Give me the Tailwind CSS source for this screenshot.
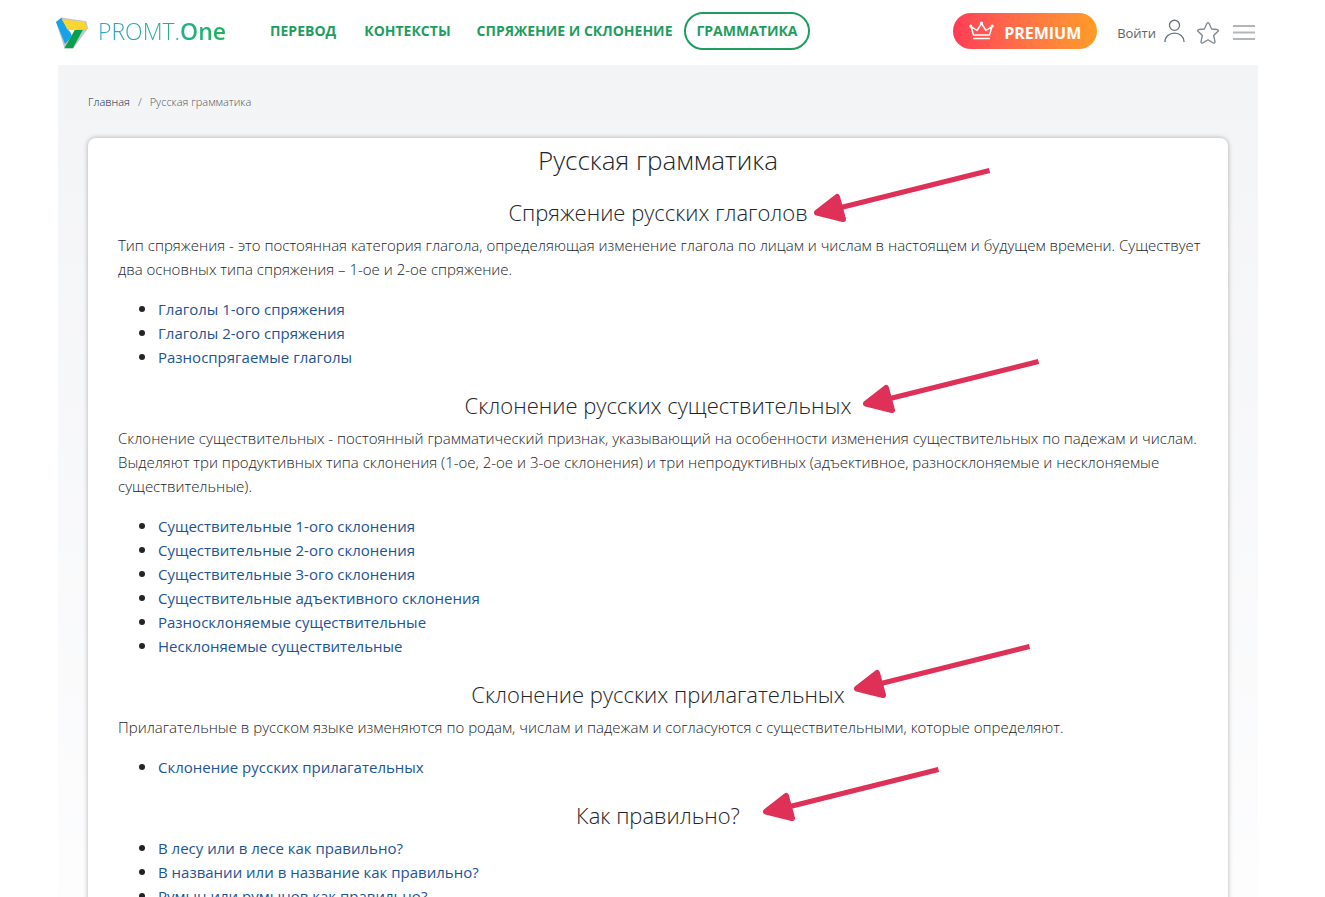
<!DOCTYPE html>
<html lang="ru">
<head>
<meta charset="utf-8">
<meta name="viewport" content="width=device-width, initial-scale=1">
<title>Русская грамматика</title>
<script src="https://cdn.jsdelivr.net/npm/@tailwindcss/browser@4"></script>
</head>
<body class="h-screen overflow-hidden bg-white pr-[9px] font-['Open_Sans','Noto_Sans',sans-serif] text-[15px] leading-6 text-[#212529]">
<svg class="hidden" aria-hidden="true">
  <symbol id="arrow" viewBox="0 0 180 60">
    <path d="M28 41.500 176.500 4.500" stroke="#df3057" stroke-width="5" fill="none"/>
    <path d="M4 46.500 24 31 30 53Z" fill="#df3057" stroke="#df3057" stroke-width="6" stroke-linejoin="round"/>
  </symbol>
</svg>
<div class="mx-auto max-w-[1200px]">
  <header class="flex h-[65px] items-center pb-1">
    <a href="#" class="-ml-0.5 flex items-center gap-2.5">
      <svg class="mt-1 h-8 w-8" viewBox="18 48 99 96" aria-hidden="true">
        <path d="M35 48 112 60 117 82 72 143 44 143 18 62Z" fill="#c4c6c8"/>
        <path d="M35 49 18 62 46 130 62 112 69 96 58 90 52 84Z" fill="#16a2e6"/>
        <path d="M36 54 105 61 115 84 54 84Z" fill="#fdd52f"/>
        <path d="M58 86H80L68 105Z" fill="#fff"/>
        <path d="M76 87H101L70 143H44Z" fill="#08a04c"/>
      </svg>
      <span class="bg-linear-to-r from-[#35a3c9] to-[#21b35c] bg-clip-text text-[23px] leading-8 font-light text-transparent">PROMT.<b class="font-semibold">One</b></span>
    </a>
    <nav class="ml-[30px] flex items-center text-sm leading-5 font-bold whitespace-nowrap text-[#1f9d60]">
      <a href="#" class="px-3.5">ПЕРЕВОД</a>
      <a href="#" class="pr-3 pl-3.5">КОНТЕКСТЫ</a>
      <a href="#" class="pr-3 pl-3.5">СПРЯЖЕНИЕ И СКЛОНЕНИЕ</a>
      <a href="#" class="rounded-full border-2 border-[#1f9d60] px-2.5 py-[7px]">ГРАММАТИКА</a>
    </nav>
    <div class="ml-auto flex items-center pr-[3px]">
      <a href="#" class="flex h-9 w-36 items-center gap-2.5 rounded-full bg-linear-to-r from-[#ff3a55] to-[#ff9c24] pl-4 text-base leading-5 font-bold text-white">
        <svg class="h-5 w-[25px]" viewBox="0 0 25 20" fill="none" stroke="#fff" stroke-width="1.500" stroke-linejoin="round" aria-hidden="true">
          <path d="M4.500 14 2 5.500 8 9.500 12.500 2.500 17 9.500 23 5.500 20.500 14ZM4 17.500H21"/>
          <g fill="#fff" stroke="none"><circle cx="1.800" cy="5" r="1.600"/><circle cx="12.500" cy="2" r="1.600"/><circle cx="23.200" cy="5" r="1.600"/></g>
        </svg>
        <span class="pt-1">PREMIUM</span>
      </a>
      <div class="flex items-center pt-1 pl-5">
        <a href="#" class="flex items-center gap-2 text-[13px] text-[#5b6470]">Войти
          <svg class="-mt-1 h-6 w-[21px]" viewBox="0 0 22 24" fill="none" stroke="#6b7580" stroke-width="1.400" aria-hidden="true"><circle cx="11" cy="6" r="5.300"/><path d="M1 23.500C1 18 5.500 14.200 11 14.200S21 18 21 23.500"/></svg>
        </a>
        <button type="button" aria-label="Избранное" class="ml-3"><svg class="h-[22px] w-[22px]" viewBox="0 0 22 22" fill="none" stroke="#7b858e" stroke-width="1.300" stroke-linejoin="round" aria-hidden="true"><path d="M10 1.300Q11 0 12 1.300L14.600 7 20.300 7.500Q22 8 21 9.300L16.700 13.500 18 19.800Q18 21.500 16.300 21L11 17.800 5.700 21Q4 21.500 4 19.800L5.300 13.500 1 9.300Q0 8 1.700 7.500L7.400 7Z"/></svg></button>
        <button type="button" aria-label="Меню" class="ml-3.5"><svg class="h-[15px] w-[22px]" viewBox="0 0 22 15" stroke="#b2b6b8" stroke-width="2" aria-hidden="true"><path d="M0 1H22M0 7.500H22M0 14H22"/></svg></button>
      </div>
    </div>
  </header>
  <div class="bg-linear-to-b from-[#f3f4f6] to-[#fdfdfe] px-[30px]">
    <nav aria-label="Навигация" class="flex h-[73px] items-center gap-2 text-[11px] font-light text-[#4c5560]">
      <a href="#" class="text-[#0b2447]">Главная</a><span>/</span><span>Русская грамматика</span>
    </nav>
    <main class="rounded-lg bg-white pt-0.5 pr-4 pl-[30px] font-light shadow-[0_0_5px_rgba(0,0,0,0.3)]">
      <h1 class="mr-3.5 mb-3 text-center text-[26px] leading-10 font-light">Русская грамматика</h1>
      <section class="pb-4">
        <h2 class="relative mr-3.5 mb-px text-center text-[22px] leading-10">Спряжение русских глаголов<svg class="absolute -top-6.5 left-1/2 ml-[155px] h-[60px] w-[180px]" aria-hidden="true"><use href="#arrow"/></svg></h2>
        <p>Тип спряжения - это постоянная категория глагола, определяющая изменение глагола по лицам и числам в настоящем и будущем времени. Существует два основных типа спряжения – 1-ое и 2-ое спряжение.</p>
        <ul class="mt-4 list-disc pl-10 font-normal marker:text-[18px] marker:leading-none">
          <li><a href="#" class="text-[#1c5596]">Глаголы 1-ого спряжения</a></li>
          <li><a href="#" class="text-[#1c5596]">Глаголы 2-ого спряжения</a></li>
          <li><a href="#" class="text-[#1c5596]">Разноспрягаемые глаголы</a></li>
        </ul>
      </section>
      <section class="pb-4">
        <h2 class="relative mr-3.5 mb-px text-center text-[22px] leading-10">Склонение русских существительных<svg class="absolute -top-7 left-1/2 ml-[204px] h-[60px] w-[180px]" aria-hidden="true"><use href="#arrow"/></svg></h2>
        <p>Склонение существительных - постоянный грамматический признак, указывающий на особенности изменения существительных по падежам и числам. Выделяют три продуктивных типа склонения (1-ое, 2-ое и 3-ое склонения) и три непродуктивных (адъективное, разносклоняемые и несклоняемые существительные).</p>
        <ul class="mt-4 list-disc pl-10 font-normal marker:text-[18px] marker:leading-none">
          <li><a href="#" class="text-[#1c5596]">Существительные 1-ого склонения</a></li>
          <li><a href="#" class="text-[#1c5596]">Существительные 2-ого склонения</a></li>
          <li><a href="#" class="text-[#1c5596]">Существительные 3-ого склонения</a></li>
          <li><a href="#" class="text-[#1c5596]">Существительные адъективного склонения</a></li>
          <li><a href="#" class="text-[#1c5596]">Разносклоняемые существительные</a></li>
          <li><a href="#" class="text-[#1c5596]">Несклоняемые существительные</a></li>
        </ul>
      </section>
      <section class="pb-4">
        <h2 class="relative mr-3.5 mb-px text-center text-[22px] leading-10">Склонение русских прилагательных<svg class="absolute -top-8 left-1/2 ml-[195px] h-[60px] w-[180px]" aria-hidden="true"><use href="#arrow"/></svg></h2>
        <p>Прилагательные в русском языке изменяются по родам, числам и падежам и согласуются с существительными, которые определяют.</p>
        <ul class="mt-4 list-disc pl-10 font-normal marker:text-[18px] marker:leading-none">
          <li><a href="#" class="text-[#1c5596]">Склонение русских прилагательных</a></li>
        </ul>
      </section>
      <section class="pb-4">
        <h2 class="relative mr-3.5 mb-px text-center text-[22px] leading-10">Как правильно?<svg class="absolute -top-7.5 left-1/2 ml-[104px] h-[60px] w-[180px]" aria-hidden="true"><use href="#arrow"/></svg></h2>
        <ul class="list-disc pl-10 font-normal marker:text-[18px] marker:leading-none">
          <li><a href="#" class="text-[#1c5596]">В лесу или в лесе как правильно?</a></li>
          <li><a href="#" class="text-[#1c5596]">В названии или в название как правильно?</a></li>
          <li><a href="#" class="text-[#1c5596]">Румын или румынов как правильно?</a></li>
        </ul>
      </section>
    </main>
  </div>
</div>
</body>
</html>
